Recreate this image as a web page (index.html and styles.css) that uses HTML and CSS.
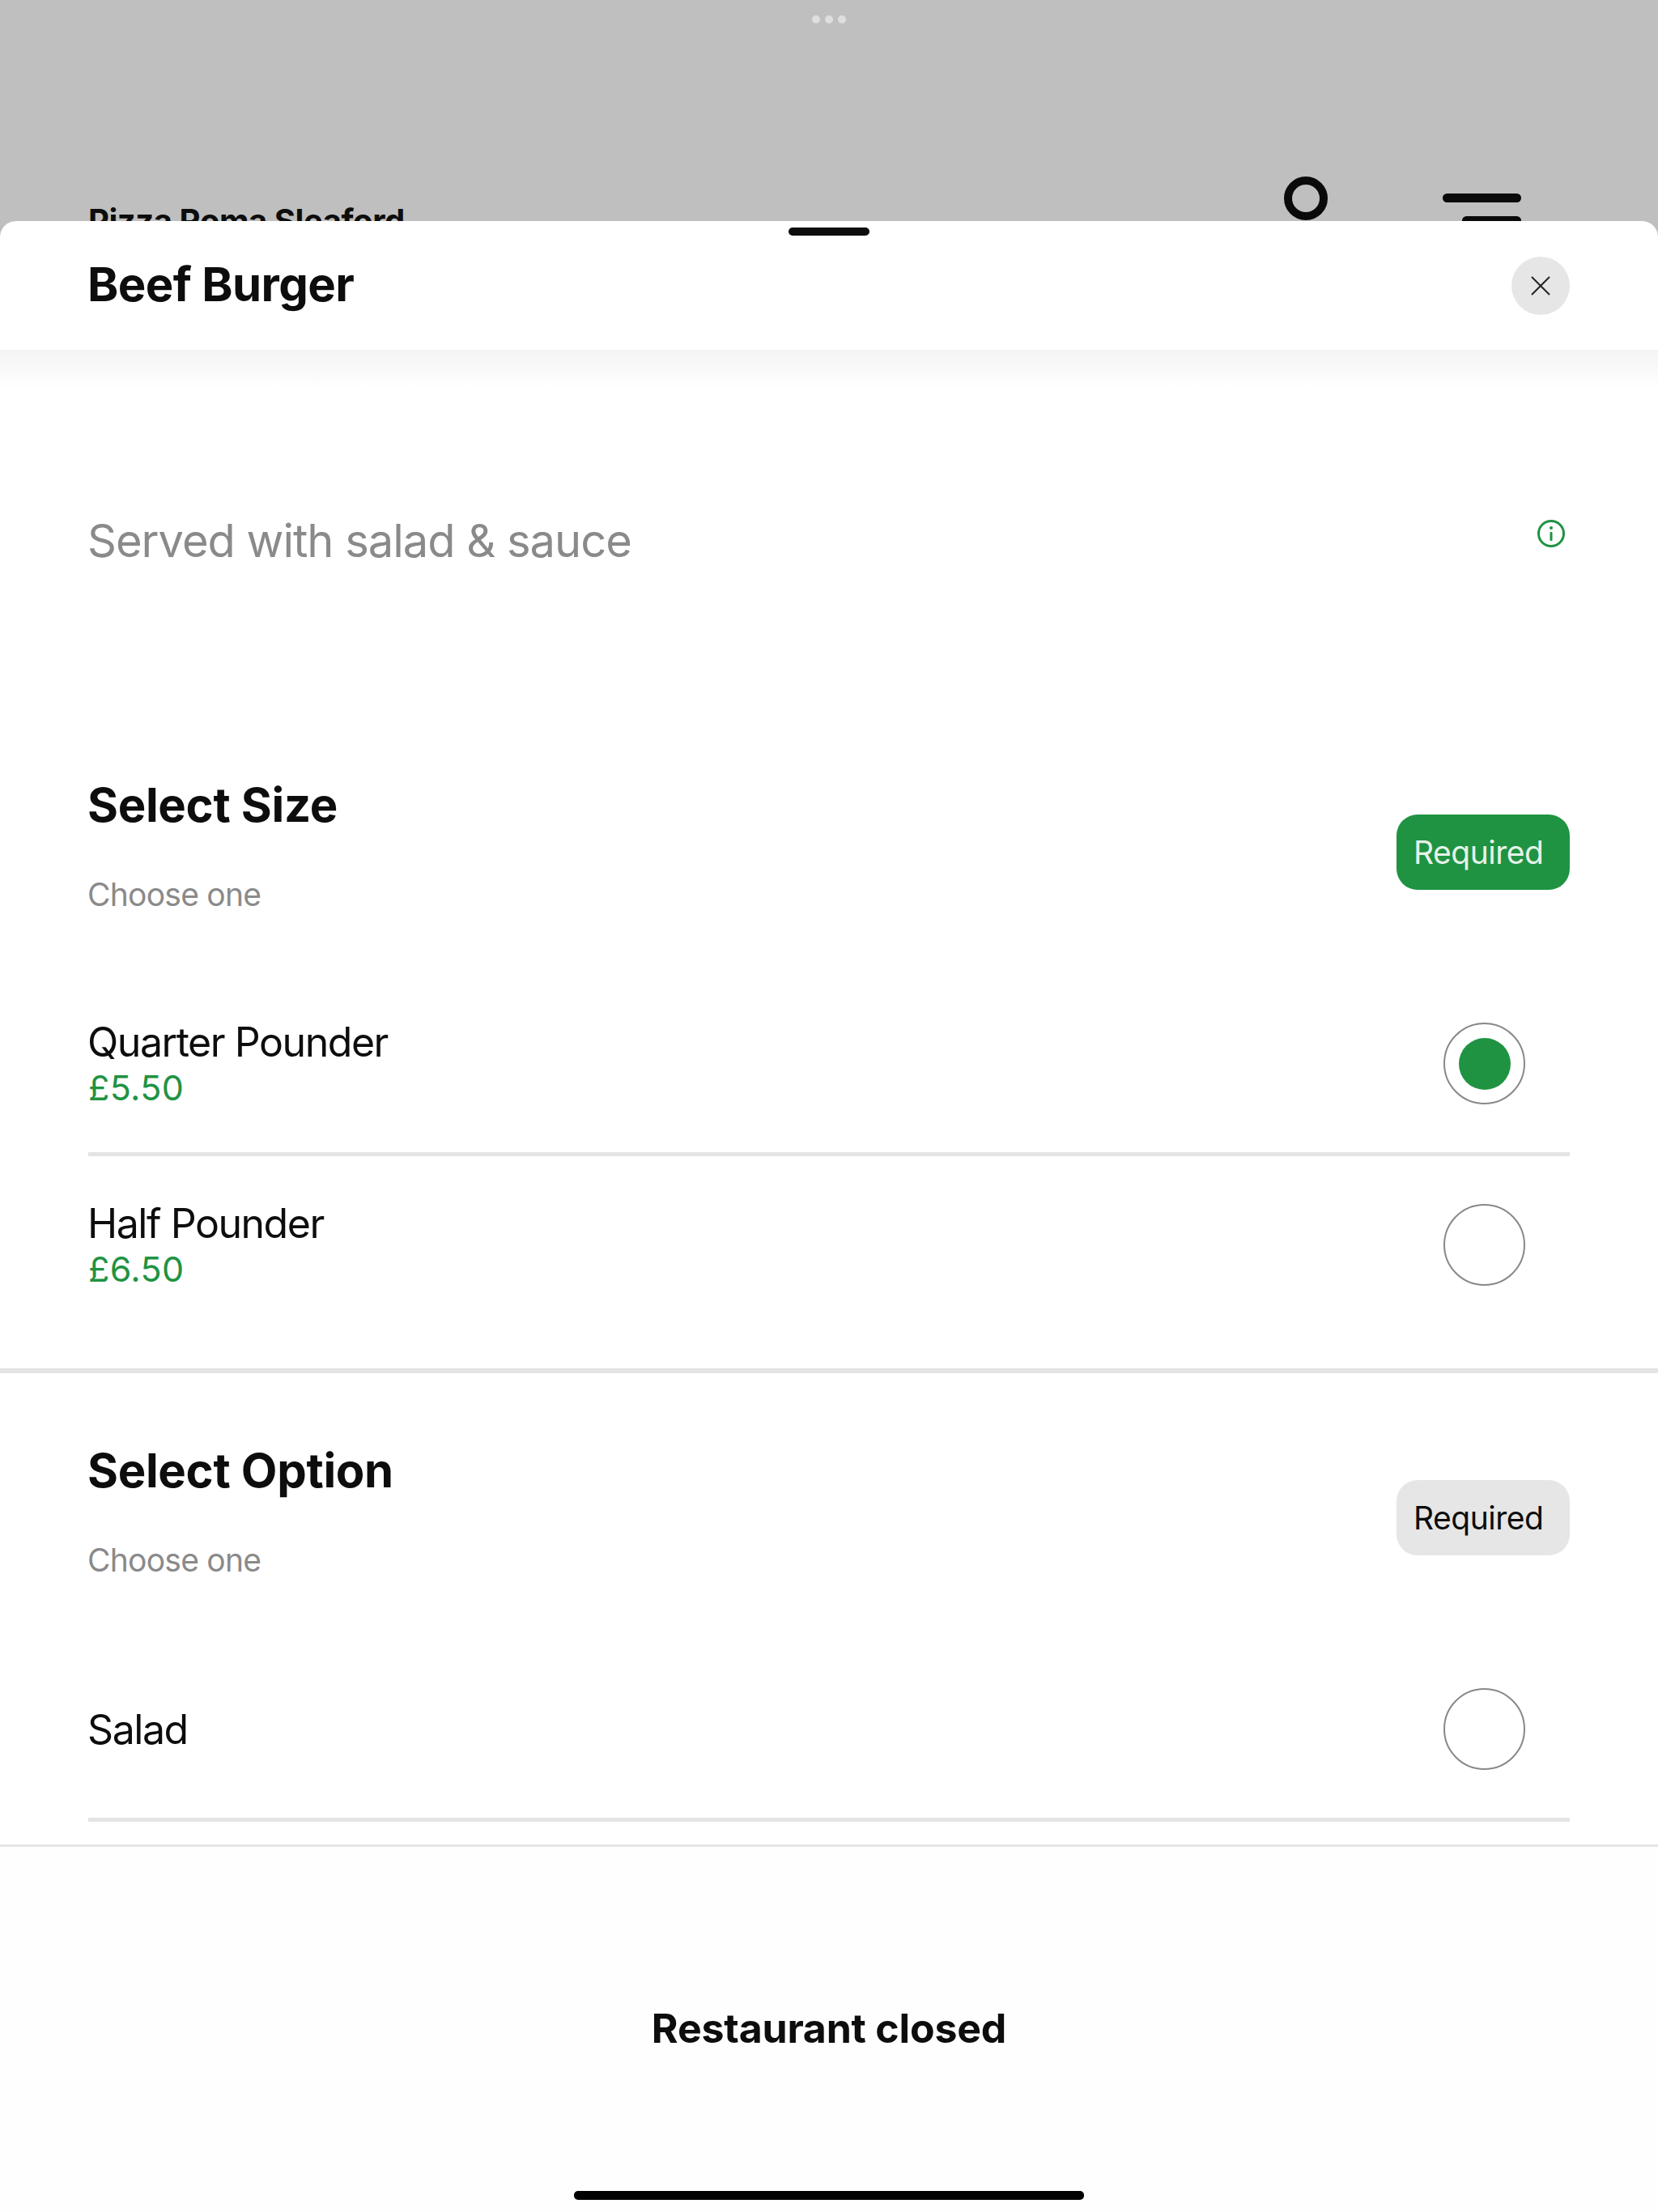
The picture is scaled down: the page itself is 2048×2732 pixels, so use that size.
FILE: index.html
```html
<!DOCTYPE html>
<html lang="en">
<head>
    <meta charset="UTF-8">
    <title>Beef Burger</title>
    <link rel="stylesheet" href="styles.css">
</head>
<body>

    <div class="scrim">
        <div class="dots"><span></span><span></span><span></span></div>
        <div class="topbar">
            <div class="shop">Pizza Roma Sleaford</div>
            <div class="ring"></div>
            <div class="burger"><span></span><span class="short"></span></div>
        </div>
    </div>

    <div class="sheet">
        <div class="sheet-head">
            <div class="handle"></div>
            <h1>Beef Burger</h1>
            <button class="close">
                <svg width="24" height="24" viewBox="0 0 24 24"><path d="M1 1L23 23M23 1L1 23" stroke="#222" stroke-width="2" fill="none"/></svg>
            </button>
        </div>
        <div class="fade"></div>

        <div class="desc">
            <p>Served with salad &amp; sauce</p>
            <svg class="info" width="36" height="36" viewBox="0 0 36 36">
                <circle cx="18" cy="18" r="15.5" stroke="#1f9342" stroke-width="3" fill="none"/>
                <rect x="16.5" y="16" width="3" height="11" rx="1" fill="#1f9342"/>
                <circle cx="18" cy="11" r="2" fill="#1f9342"/>
            </svg>
        </div>

        <div class="group first">
            <div class="group-head">
                <div>
                    <h2>Select Size</h2>
                    <div class="hint">Choose one</div>
                </div>
                <div class="tag green">Required</div>
            </div>
            <div class="option">
                <div>
                    <div class="name">Quarter Pounder</div>
                    <div class="price">£5.50</div>
                </div>
                <div class="radio on"></div>
            </div>
            <div class="option last">
                <div>
                    <div class="name">Half Pounder</div>
                    <div class="price">£6.50</div>
                </div>
                <div class="radio"></div>
            </div>
        </div>

        <div class="group second">
            <div class="group-head">
                <div>
                    <h2>Select Option</h2>
                    <div class="hint">Choose one</div>
                </div>
                <div class="tag">Required</div>
            </div>
            <div class="option">
                <div class="name">Salad</div>
                <div class="radio"></div>
            </div>
        </div>

        <div class="foot">
            <div class="closed">Restaurant closed</div>
            <div class="home"></div>
        </div>
    </div>

</body>
</html>
```

FILE: styles.css
```css
* { box-sizing: border-box; }
html, body { margin: 0; padding: 0; }
body { width: 2048px; height: 2732px; overflow: hidden; font-family: Inter, "Liberation Sans", sans-serif; background-color: #bfbfbf; color: #0d0d0d; }

.scrim { height: 273px; overflow: hidden; padding-top: 19px; }
.dots { display: flex; justify-content: center; gap: 6px; height: 10px; }
.dots span { width: 10px; height: 10px; border-radius: 50%; background-color: #dedede; }
.topbar { display: flex; align-items: flex-start; margin-top: 189px; padding: 0 169px 0 109px; }
.shop { flex: 1; margin-top: 32px; font-size: 40px; line-height: 46px; font-weight: 700; letter-spacing: -0.45px; }
.ring { width: 54px; height: 54px; border: 10px solid #0a0a0a; border-radius: 50%; }
.burger { width: 97px; margin-left: 142px; margin-top: 21px; display: flex; flex-direction: column; align-items: flex-end; gap: 17px; }
.burger span { display: block; width: 97px; height: 11px; border-radius: 6px; background-color: #0a0a0a; }
.burger .short { width: 73px; }

.sheet { height: 2459px; background-color: #fff; border-radius: 20px 20px 0 0; position: relative; display: flex; flex-direction: column; }
.sheet-head { height: 159px; display: flex; align-items: center; justify-content: space-between; padding: 0 109px; position: relative; }
.handle { position: absolute; top: 8px; left: 974px; width: 100px; height: 10px; border-radius: 5px; background-color: #0d0d0d; }
h1 { margin: -3px 0 0 -1px; font-size: 58px; line-height: 70px; font-weight: 700; letter-spacing: -0.6px; }
.close { width: 72px; height: 72px; padding: 0; border: 0; border-radius: 50%; background-color: #e6e6e6; display: flex; align-items: center; justify-content: center; }
.fade { height: 48px; background: linear-gradient(#f4f4f4, #fff); }

.desc { display: flex; justify-content: space-between; padding: 0 114px 0 108px; margin-top: 153px; }
.desc p { margin: 0; font-size: 56px; line-height: 70px; color: #8a8a8a; letter-spacing: -1px; }
.info { margin-top: 8px; }

.group-head { display: flex; justify-content: space-between; align-items: flex-start; padding: 0 109px 0 108px; }
h2 { margin: 0; font-size: 58px; line-height: 70px; font-weight: 700; letter-spacing: -0.3px; }
.hint { margin-top: 52px; font-size: 39px; line-height: 48px; color: #8a8a8a; letter-spacing: -0.75px; }
.tag { width: 214px; height: 93px; margin-top: 47px; padding-left: 21px; border-radius: 26px; background-color: #e6e6e6; font-size: 39px; line-height: 93px; letter-spacing: -0.5px; }
.tag.green { background-color: #1f9342; color: #e6f2e9; }

.group.first { margin-top: 256px; padding-bottom: 38px; border-bottom: 6px solid #e4e4e4; }
.group.second { margin-top: 85px; }

.option { display: flex; justify-content: space-between; align-items: center; height: 224px; margin: 0 109px; padding-right: 55px; border-bottom: 5px solid #e4e4e4; }
.group-head + .option { margin-top: 75px; }
.option.last { border-bottom-color: transparent; }
.name { margin-left: -1px; font-size: 50px; line-height: 58px; letter-spacing: -1.45px; }
.price { font-size: 43px; line-height: 54px; color: #1f9342; letter-spacing: 0.4px; }
.radio { width: 101px; height: 101px; border: 2px solid #888; border-radius: 50%; display: flex; align-items: center; justify-content: center; }
.radio.on::after { content: ""; width: 64px; height: 64px; border-radius: 50%; background-color: #1f9342; }

.foot { flex: 1; border-top: 3px solid #e4e4e4; margin-top: 28px; background-color: #fefefe; display: flex; flex-direction: column; align-items: center; }
.closed { margin-top: 193px; font-size: 50px; line-height: 62px; font-weight: 700; letter-spacing: -0.2px; }
.home { margin-top: 170px; width: 630px; height: 11px; border-radius: 5px; background-color: #000; }
```
